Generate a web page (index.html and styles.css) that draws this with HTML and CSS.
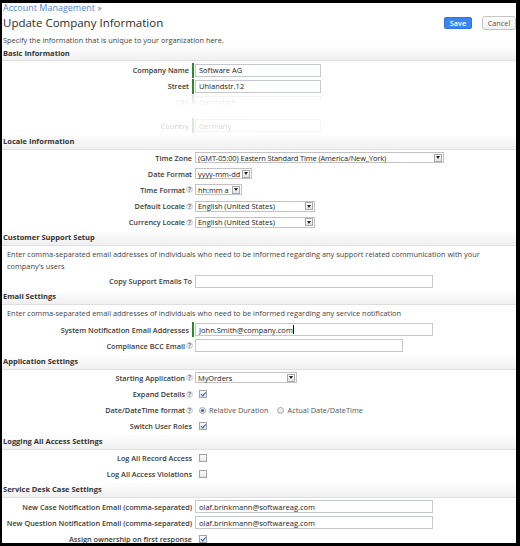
FILE: index.html
```html
<!DOCTYPE html>
<html>
<head>
<meta charset="utf-8">
<title>Update Company Information</title>
<link rel="stylesheet" href="styles.css">
</head>
<body>
<div class="frame">
  <div class="crumb">Account Management »</div>
  <div class="titlebar">
    <h1 class="title">Update Company Information</h1>
    <div class="actions">
      <span class="btn btn-save">Save</span>
      <span class="btn btn-cancel">Cancel</span>
    </div>
  </div>
  <p class="intro">Specify the information that is unique to your organization here.</p>

  <div class="content">
  <section class="sec sec-basic">
    <div class="sec-head">Basic Information</div>
    <div class="row req"><div class="lbl">Company Name</div><span class="mark"></span><div class="fld"><span class="inp w126">Software AG</span></div></div>
    <div class="row req"><div class="lbl">Street</div><span class="mark"></span><div class="fld"><span class="inp w126">Uhlandstr.12</span></div></div>
    <div class="row req ghost-top"><div class="lbl">City</div><span class="mark"></span><div class="fld"><span class="inp w126">Darmstadt</span></div></div>
    <div class="ghost-gap"></div>
    <div class="row req ghost"><div class="lbl">Country</div><span class="mark"></span><div class="fld"><span class="inp w126">Germany</span></div></div>
  </section>

  <section class="sec">
    <div class="sec-head">Locale Information</div>
    <div class="row"><div class="lbl">Time Zone</div><span class="mark"></span><div class="fld"><span class="sel w248"><span class="v tight">(GMT-05:00) Eastern Standard Time (America/New_York)</span><span class="arr"></span></span></div></div>
    <div class="row"><div class="lbl">Date Format</div><span class="mark"></span><div class="fld"><span class="sel w56"><span class="v">yyyy-mm-dd</span><span class="arr"></span></span></div></div>
    <div class="row"><div class="lbl">Time Format<span class="help">?</span></div><span class="mark"></span><div class="fld"><span class="sel w47"><span class="v">hh:mm a</span><span class="arr"></span></span></div></div>
    <div class="row"><div class="lbl">Default Locale<span class="help">?</span></div><span class="mark"></span><div class="fld"><span class="sel w120"><span class="v">English (United States)</span><span class="arr"></span></span></div></div>
    <div class="row"><div class="lbl">Currency Locale<span class="help">?</span></div><span class="mark"></span><div class="fld"><span class="sel w120"><span class="v">English (United States)</span><span class="arr"></span></span></div></div>
  </section>

  <section class="sec">
    <div class="sec-head">Customer Support Setup</div>
    <p class="desc">Enter comma-separated email addresses of individuals who need to be informed regarding any support related communication with your<br>company's users</p>
    <div class="row"><div class="lbl">Copy Support Emails To</div><span class="mark"></span><div class="fld"><span class="inp w238"></span></div></div>
  </section>

  <section class="sec sec-email">
    <div class="sec-head">Email Settings</div>
    <p class="desc">Enter comma-separated email addresses of individuals who need to be informed regarding any service notification</p>
    <div class="row req"><div class="lbl">System Notification Email Addresses</div><span class="mark"></span><div class="fld"><span class="inp w238">John.Smith@company.com<span class="caret"></span></span></div></div>
    <div class="row"><div class="lbl">Compliance BCC Email<span class="help">?</span></div><span class="mark"></span><div class="fld"><span class="inp w208"></span></div></div>
  </section>

  <section class="sec">
    <div class="sec-head">Application Settings</div>
    <div class="row"><div class="lbl">Starting Application<span class="help">?</span></div><span class="mark"></span><div class="fld"><span class="sel w102"><span class="v">MyOrders</span><span class="arr"></span></span></div></div>
    <div class="row"><div class="lbl">Expand Details<span class="help">?</span></div><span class="mark"></span><div class="fld"><span class="cb on"></span></div></div>
    <div class="row"><div class="lbl">Date/DateTime format<span class="help">?</span></div><span class="mark"></span><div class="fld radios"><span class="rd on"></span><span class="rtxt">Relative Duration</span><span class="rd second"></span><span class="rtxt">Actual Date/DateTime</span></div></div>
    <div class="row"><div class="lbl">Switch User Roles</div><span class="mark"></span><div class="fld"><span class="cb on"></span></div></div>
  </section>

  <section class="sec">
    <div class="sec-head">Logging All Access Settings</div>
    <div class="row"><div class="lbl">Log All Record Access</div><span class="mark"></span><div class="fld"><span class="cb"></span></div></div>
    <div class="row"><div class="lbl">Log All Access Violations</div><span class="mark"></span><div class="fld"><span class="cb"></span></div></div>
  </section>

  <section class="sec">
    <div class="sec-head">Service Desk Case Settings</div>
    <div class="row"><div class="lbl">New Case Notification Email (comma-separated)</div><span class="mark"></span><div class="fld"><span class="inp w238">olaf.brinkmann@softwareag.com</span></div></div>
    <div class="row"><div class="lbl">New Question Notification Email (comma-separated)</div><span class="mark"></span><div class="fld"><span class="inp w238">olaf.brinkmann@softwareag.com</span></div></div>
    <div class="row"><div class="lbl">Assign ownership on first response</div><span class="mark"></span><div class="fld"><span class="cb on"></span></div></div>
  </section>
  </div>
</div>
</body>
</html>
```

FILE: styles.css
```css
html, body {
  margin: 0;
  padding: 0;
  background: #000;
  height: 546px;
  overflow: hidden;
}

body {
  font-family: "Open Sans", "Noto Sans", "Liberation Sans", sans-serif;
  color: #333;
}

.frame {
  margin: 3px 4px 0 2px;
  width: 514px;
  height: 540px;
  background: #fff;
}

.content {
  height: 497.5px;
  overflow: hidden;
}

.crumb {
  height: 9px;
  line-height: 9px;
  font-size: 9px;
  color: #5585d2;
  padding-left: 1px;
}

.titlebar {
  height: 21px;
  display: flex;
  align-items: center;
  justify-content: space-between;
}

.title {
  margin: 0;
  padding-left: 1px;
  font-size: 11.5px;
  font-weight: 400;
  color: #2b2b2b;
  line-height: 21px;
}

.actions {
  display: flex;
  align-items: center;
  gap: 10px;
}

.btn {
  display: flex;
  align-items: center;
  justify-content: center;
  box-sizing: border-box;
  font-size: 7.3px;
}

.btn-save {
  width: 28px;
  height: 12px;
  background: #3c84f2;
  border: 1px solid #2f74e0;
  border-radius: 2px;
  color: #fff;
  font-weight: 600;
}

.btn-cancel {
  width: 34px;
  height: 14px;
  background: linear-gradient(#ffffff, #f0f0f0);
  border: 1px solid #c6c6c6;
  border-radius: 3px;
  color: #555;
}

.intro {
  margin: 0;
  height: 12.5px;
  line-height: 15px;
  font-size: 7.4px;
  color: #444;
  padding-left: 1px;
}

.sec-head {
  height: 16px;
  box-sizing: border-box;
  line-height: 14px;
  padding-left: 1px;
  font-size: 7.5px;
  font-weight: 700;
  color: #333;
  background: linear-gradient(#ffffff, #f0f0f0);
  border-bottom: 1px solid #dfdfdf;
}

.sec-basic .sec-head {
  height: 15.5px;
}

.sec-basic .sec-head + .row {
  margin-top: 1px;
}

.row {
  display: grid;
  grid-template-columns: 190px 3px 1fr;
  height: 16.1px;
  align-items: center;
}

.lbl {
  display: flex;
  justify-content: flex-end;
  align-items: center;
  white-space: nowrap;
  font-size: 7.3px;
  font-weight: 600;
  color: #3a3a3a;
}

.req .lbl {
  padding-right: 3px;
}

.mark {
  height: 15px;
}

.req .mark {
  width: 2px;
  background: #2c8a2c;
}

.fld {
  display: flex;
  align-items: center;
}

.help {
  display: inline-flex;
  align-items: center;
  justify-content: center;
  box-sizing: border-box;
  width: 7px;
  height: 7px;
  margin-left: 1px;
  margin-right: -1px;
  border-radius: 50%;
  border: 0.5px solid #cfcfcf;
  background: #eeeeee;
  color: #7d7d7d;
  font-size: 6.6px;
  font-weight: 700;
  line-height: 7px;
}

.inp {
  display: flex;
  align-items: center;
  box-sizing: border-box;
  height: 13px;
  border: 1px solid #c6c8d0;
  padding-left: 3px;
  font-size: 7.5px;
  color: #222;
  white-space: nowrap;
}

.caret {
  display: inline-block;
  width: 0;
  height: 9px;
  border-left: 1px solid #111;
  margin-left: 0.5px;
}

.sel {
  display: flex;
  align-items: center;
  box-sizing: border-box;
  height: 11px;
  border: 1px solid #c3c3c3;
  padding-left: 2px;
  font-size: 7.4px;
  color: #222;
}

.sel .v {
  flex: 1;
  white-space: nowrap;
  overflow: hidden;
}

.sel .v.tight {
  letter-spacing: -0.1px;
}

.arr {
  display: flex;
  align-items: center;
  justify-content: center;
  flex: none;
  box-sizing: border-box;
  width: 8px;
  height: 8px;
  margin-right: 1px;
  border: 1px solid #a8a8a8;
  background: linear-gradient(#ffffff, #e4e4e4);
}

.arr::after {
  content: "";
  border-left: 2.5px solid transparent;
  border-right: 2.5px solid transparent;
  border-top: 3px solid #222;
}

.w126 { width: 126px; }
.w238 { width: 238px; }
.w208 { width: 208px; }
.w248 { width: 249px; }
.w56 { width: 57px; }
.w47 { width: 47px; }
.w120 { width: 120px; }
.w102 { width: 102px; }

.cb {
  display: flex;
  align-items: center;
  justify-content: center;
  box-sizing: border-box;
  width: 8px;
  height: 8px;
  margin-left: 4px;
  border: 1px solid #a3a3a3;
  background: linear-gradient(#fdfdfd, #e6e6e6);
}

.cb.on::after {
  content: "";
  width: 1.6px;
  height: 3.6px;
  margin-top: -1px;
  border-right: 1.3px solid #2e5db3;
  border-bottom: 1.3px solid #2e5db3;
  transform: rotate(40deg);
}

.radios .rd {
  display: flex;
  align-items: center;
  justify-content: center;
  box-sizing: border-box;
  width: 7px;
  height: 7px;
  margin-left: 4px;
  border-radius: 50%;
  border: 1px solid #a6a6a6;
  background: linear-gradient(#fafafa, #e0e0e0);
}

.radios .rd.second {
  margin-left: 9px;
}

.rd.on::after {
  content: "";
  width: 3px;
  height: 3px;
  border-radius: 50%;
  background: #2f62c4;
}

.rtxt {
  margin-left: 3px;
  font-size: 7.4px;
  color: #555;
  white-space: nowrap;
}

.desc {
  margin: 0;
  padding: 2px 0 1px 5px;
  line-height: 12px;
  font-size: 7.4px;
  color: #444;
  white-space: nowrap;
}

.sec-email .desc {
  padding-bottom: 2.5px;
}

.ghost-top {
  -webkit-mask-image: linear-gradient(rgba(0,0,0,0.25), rgba(0,0,0,0.05) 60%, rgba(0,0,0,0) 75%);
  mask-image: linear-gradient(rgba(0,0,0,0.25), rgba(0,0,0,0.05) 60%, rgba(0,0,0,0) 75%);
}

.ghost-gap {
  height: 7.3px;
}

.ghost {
  opacity: 0.18;
}
```
